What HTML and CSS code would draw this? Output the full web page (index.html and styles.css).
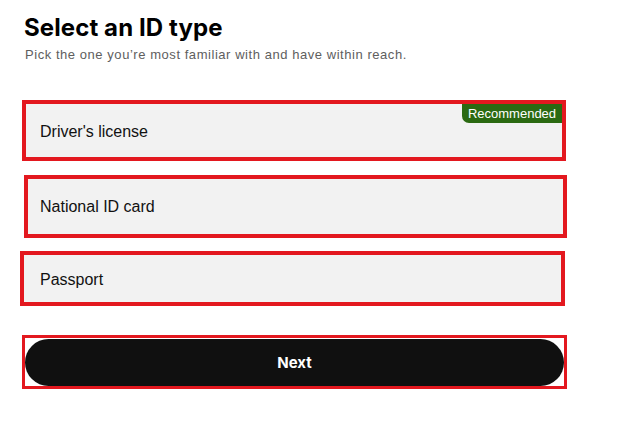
FILE: index.html
```html
<!DOCTYPE html>
<html lang="en">
<head>
<meta charset="utf-8">
<title>Select an ID type</title>
<link rel="stylesheet" href="styles.css">
</head>
<body>
<main class="page">
  <h1 class="title">Select an ID type</h1>
  <p class="subtitle">Pick the one you’re most familiar with and have within reach.</p>
  <div class="options">
    <div class="option option-1">
      <span class="option-label">Driver's license</span>
      <span class="badge">Recommended</span>
    </div>
    <div class="option option-2">
      <span class="option-label">National ID card</span>
    </div>
    <div class="option option-3">
      <span class="option-label">Passport</span>
    </div>
  </div>
  <div class="next-wrap">
    <button class="next" type="button">Next</button>
  </div>
</main>
</body>
</html>
```

FILE: styles.css
```css
html, body {
  margin: 0;
  padding: 0;
  background: #ffffff;
}

.page {
  display: flex;
  flex-direction: column;
  padding: 12px 0 0 0;
  font-family: "Liberation Sans", Arial, sans-serif;
  color: #111111;
}

.title {
  margin: 0 0 0 24px;
  font-family: Inter, "Liberation Sans", sans-serif;
  font-size: 24px;
  font-weight: 700;
  line-height: 32px;
  letter-spacing: 0.1px;
  color: #000000;
}

.subtitle {
  margin: 3px 0 0 25px;
  font-size: 13px;
  line-height: 16px;
  letter-spacing: 0.55px;
  color: #5e5e5e;
}

.options {
  display: flex;
  flex-direction: column;
  margin-top: 37px;
}

.option {
  position: relative;
  display: flex;
  align-items: center;
  box-sizing: border-box;
  border: 4px solid #e3181f;
  background: #f2f2f2;
  font-size: 16px;
}

.option-label {
  color: #111111;
}

.option-1 {
  margin-left: 22px;
  width: 544px;
  height: 61px;
  padding: 2px 0 0 14px;
}

.option-2 {
  margin: 14px 0 0 24px;
  width: 543px;
  height: 63px;
  padding-left: 12px;
}

.option-3 {
  margin: 13px 0 0 20px;
  width: 545px;
  height: 55px;
  padding: 2px 0 0 16px;
}

.badge {
  position: absolute;
  top: 0;
  right: 0;
  width: 100px;
  height: 19px;
  display: flex;
  align-items: center;
  justify-content: center;
  background: #2b6a12;
  color: #ffffff;
  font-size: 13px;
  border-bottom-left-radius: 7px;
}

.next-wrap {
  display: flex;
  box-sizing: border-box;
  margin: 29px 0 0 22px;
  width: 545px;
  height: 54px;
  border: 3px solid #e3181f;
  padding: 1px 0 0 0;
}

.next {
  flex: 1;
  height: 47px;
  border: none;
  border-radius: 24px;
  background: #101010;
  color: #ffffff;
  font-family: Inter, "Liberation Sans", sans-serif;
  font-size: 15px;
  font-weight: 700;
  cursor: pointer;
}
```
